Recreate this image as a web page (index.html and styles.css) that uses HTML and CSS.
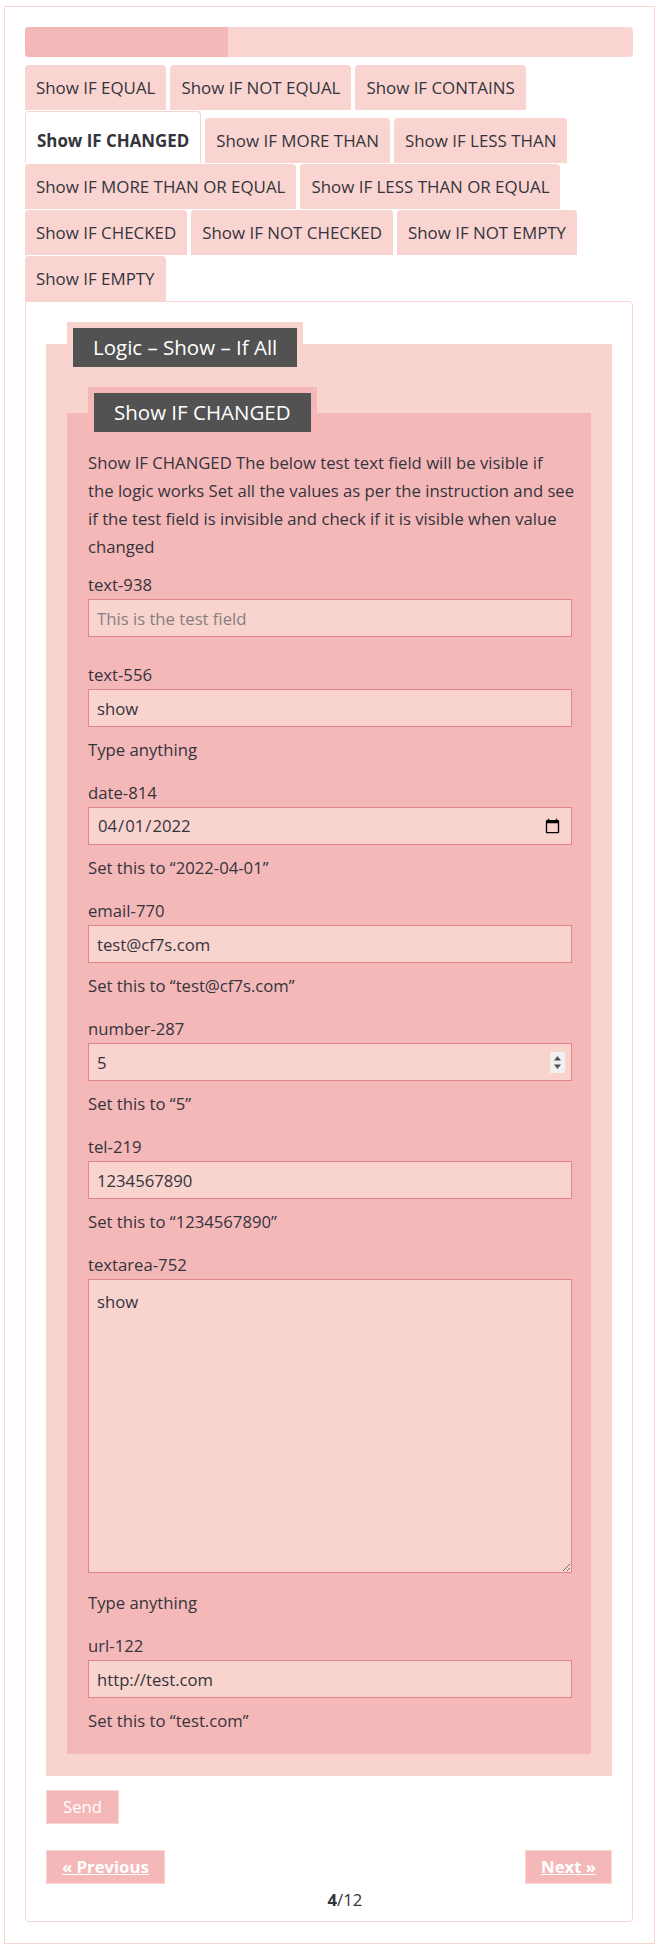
FILE: index.html
```html
<!DOCTYPE html>
<html lang="en">
<head>
<meta charset="utf-8">
<title>Logic – Show – If All</title>
<link rel="stylesheet" href="styles.css">
</head>
<body>
<div class="wrap">
  <div class="progress"><div class="progress-fill" style="width:33.333%"></div></div>
  <ul class="tabs">
    <li class="tab">Show IF EQUAL</li>
    <li class="tab">Show IF NOT EQUAL</li>
    <li class="tab">Show IF CONTAINS</li>
    <li class="tab active">Show IF CHANGED</li>
    <li class="tab">Show IF MORE THAN</li>
    <li class="tab">Show IF LESS THAN</li>
    <li class="tab">Show IF MORE THAN OR EQUAL</li>
    <li class="tab">Show IF LESS THAN OR EQUAL</li>
    <li class="tab">Show IF CHECKED</li>
    <li class="tab">Show IF NOT CHECKED</li>
    <li class="tab">Show IF NOT EMPTY</li>
    <li class="tab">Show IF EMPTY</li>
  </ul>
  <div class="panel">
    <form class="form">
      <fieldset class="fs fs-outer">
        <legend class="lg lg-outer">Logic – Show – If All</legend>
        <fieldset class="fs fs-inner">
          <legend class="lg lg-inner">Show IF CHANGED</legend>
          <p class="intro">Show IF CHANGED The below test text field will be visible if<br>the logic works Set all the values as per the instruction and see<br>if the test field is invisible and check if it is visible when value<br>changed</p>
          <div class="field">
            <label class="label" for="f938">text-938</label>
            <input id="f938" class="input input-last" type="text" placeholder="This is the test field">
          </div>
          <div class="field">
            <label class="label" for="f556">text-556</label>
            <input id="f556" class="input" type="text" value="show">
            <p class="hint">Type anything</p>
          </div>
          <div class="field">
            <label class="label" for="f814">date-814</label>
            <input id="f814" class="input" type="date" value="2022-04-01">
            <p class="hint">Set this to “2022-04-01”</p>
          </div>
          <div class="field">
            <label class="label" for="f770">email-770</label>
            <input id="f770" class="input" type="email" value="test@cf7s.com">
            <p class="hint">Set this to “test@cf7s.com”</p>
          </div>
          <div class="field">
            <label class="label" for="f287">number-287</label>
            <div class="num-wrap">
              <input id="f287" class="input input-num" type="number" value="5">
              <span class="spinner" aria-hidden="true">
                <svg width="15" height="21" viewBox="0 0 15 21"><rect width="15" height="21" fill="#f1f1f1"/><path d="M4 8.5 L7.5 4 L11 8.5 Z" fill="#505050"/><path d="M4 12.5 L7.5 17 L11 12.5 Z" fill="#505050"/></svg>
              </span>
            </div>
            <p class="hint">Set this to “5”</p>
          </div>
          <div class="field">
            <label class="label" for="f219">tel-219</label>
            <input id="f219" class="input" type="tel" value="1234567890">
            <p class="hint">Set this to “1234567890”</p>
          </div>
          <div class="field">
            <label class="label" for="f752">textarea-752</label>
            <textarea id="f752" class="textarea">show</textarea>
            <p class="hint hint-ta">Type anything</p>
          </div>
          <div class="field">
            <label class="label" for="f122">url-122</label>
            <input id="f122" class="input" type="url" value="http://test.com">
            <p class="hint">Set this to “test.com”</p>
          </div>
        </fieldset>
      </fieldset>
      <button type="button" class="btn send">Send</button>
      <div class="pager">
        <a class="btn pager-btn" href="#">« Previous</a>
        <div class="pager-count"><b>4</b>/12</div>
        <a class="btn pager-btn" href="#">Next »</a>
      </div>
    </form>
  </div>
</div>
</body>
</html>
```

FILE: styles.css
```css
* { box-sizing: border-box; }

html, body { background: #fff; }

body {
  margin: 0;
  font-family: "Open Sans", "Noto Sans", sans-serif;
  font-size: 16.7px;
  line-height: 28px;
  color: #34343c;
}

.wrap {
  margin: 6px 7px 6px 4px;
  border: 1px solid #fad4d0;
  padding: 20px 21px 21px 20px;
}

.progress {
  height: 30px;
  background: #fad4d0;
  border-radius: 4px;
  overflow: hidden;
}

.progress-fill {
  height: 100%;
  background: #f5b8b9;
}

.tabs {
  list-style: none;
  margin: 7px 0 0;
  padding: 0;
  display: flex;
  flex-wrap: wrap;
  align-items: flex-end;
  column-gap: 4px;
  font-size: 16.9px;
}

.tab {
  margin-top: 1px;
  height: 45px;
  padding: 0 11px;
  display: flex;
  align-items: center;
  background: #fad4d0;
  border-radius: 4px 4px 0 0;
  white-space: nowrap;
}

.tab.active {
  height: 52px;
  background: #fff;
  border: 1px solid #fad4d0;
  border-bottom: 0;
  font-weight: 700;
  padding-top: 6px;
}

.panel {
  border: 1px solid #fad4d0;
  border-radius: 0 4px 4px 4px;
  padding: 20px 20px 11px;
}

.fs {
  margin: 0;
  border: 0;
  min-width: 0;
}

.fs-outer {
  background: #f9d3ce;
  border-top: 8px solid #f9d3ce;
  padding: 14px 21px 22px;
}

.fs-inner {
  background: #f5b8b9;
  padding: 11px 19px 4px 21px;
}

.lg {
  background: #525252;
  color: #fff;
  padding: 0 20px;
  line-height: 39px;
  font-size: 20.5px;
}

.lg-outer { border: 6px solid #f9d3ce; }
.lg-inner { border: 6px solid #f5b8b9; }

.intro {
  margin: 0 0 10px;
  white-space: nowrap;
}

.field {
  display: flex;
  flex-direction: column;
  margin-bottom: 15px;
}

.label { display: block; }

.input,
.textarea {
  display: block;
  width: 100%;
  margin: 0;
  border: 1px solid #e0868a;
  border-radius: 0;
  background: #f9d3ce;
  color: #34343c;
  font: inherit;
  padding: 0 8px;
}

.input { height: 38px; }

.input::placeholder { color: #858080; }

.input-last { margin-bottom: 9px; }

.textarea {
  height: 294px;
  padding: 8px;
  resize: vertical;
}

.num-wrap { position: relative; }

.input-num { -moz-appearance: textfield; }
.input-num::-webkit-inner-spin-button,
.input-num::-webkit-outer-spin-button { -webkit-appearance: none; margin: 0; }

.spinner {
  position: absolute;
  right: 7px;
  top: 9px;
  width: 15px;
  height: 21px;
  display: block;
  line-height: 0;
}

.hint { margin: 9px 0 0; }
.hint-ta { margin-top: 16px; }

.btn {
  display: inline-flex;
  align-items: center;
  height: 34px;
  background: #f5b8b9;
  border: 1px solid #fad4d0;
  color: #fff;
  font: inherit;
  padding: 0 15px;
}

.send {
  margin-top: 14px;
  padding: 0 16px;
}

.pager {
  display: flex;
  align-items: flex-start;
  margin-top: 26px;
}

.pager-btn {
  font-weight: 700;
  text-decoration: underline;
}

.pager-count {
  flex: 1;
  text-align: center;
  padding-top: 40px;
  line-height: 20px;
}
```
